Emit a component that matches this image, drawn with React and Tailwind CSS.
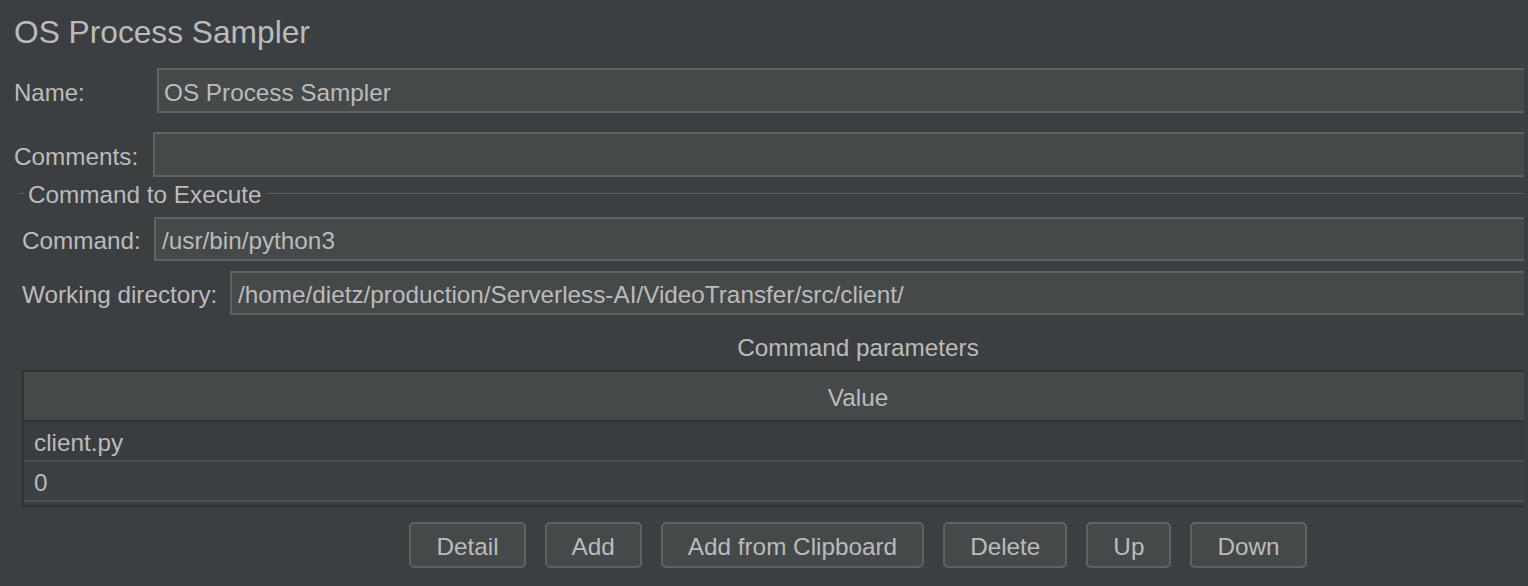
import React from 'react';

const font = { fontFamily: '"Liberation Sans", Arial, Helvetica, sans-serif' };

const Field = ({ value, className = '' }) => (
  <div className={`flex-1 h-full flex items-center bg-[#45494a] border-2 border-[#5f6162] ${className}`}>
    <span className="mt-[5px] pl-[5px] text-[24.3px] leading-none text-[#bbbbbb] whitespace-nowrap">{value}</span>
  </div>
);

const buttons = ['Detail', 'Add', 'Add from Clipboard', 'Delete', 'Up', 'Down'];

export default function App() {
  return (
    <div className="w-[1528px] h-[586px] overflow-hidden bg-[#3c3f41] flex text-[#bbbbbb]" style={font}>
      <div className="w-[1524px] shrink-0 overflow-hidden">
        <div className="w-[1716px] px-[14px]">
          {/* Title */}
          <div className="h-[62px] flex items-center">
            <h1 className="mt-[3px] text-[31.7px] leading-none">OS Process Sampler</h1>
          </div>

          {/* Name */}
          <div className="mt-[6px] h-[45px] flex items-center">
            <label className="mt-[5px] w-[143px] shrink-0 text-[24px] leading-none">Name:</label>
            <Field value="OS Process Sampler" />
          </div>

          {/* Comments */}
          <div className="mt-[19px] h-[45px] flex items-center">
            <label className="mt-[5px] w-[139px] shrink-0 text-[24.3px] leading-none">Comments:</label>
            <Field value="" />
          </div>

          {/* Command to Execute */}
          <div className="h-[32px] flex items-center">
            <div className="ml-[4px] w-[6px] h-px bg-[#5a5d5f]" />
            <span className="mt-[4px] px-[4px] text-[24.3px] leading-none whitespace-nowrap">Command to Execute</span>
            <div className="flex-1 h-px bg-[#5a5d5f]" />
          </div>

          <div className="px-[8px]">
            <div className="mt-[8px] h-[44px] flex items-center">
              <label className="mt-[5px] w-[132px] shrink-0 text-[24.3px] leading-none">Command:</label>
              <Field value="/usr/bin/python3" className="pl-[1px]" />
            </div>

            <div className="mt-[10px] h-[44px] flex items-center">
              <label className="mt-[5px] w-[208px] shrink-0 text-[24.3px] leading-none whitespace-nowrap">Working directory:</label>
              <Field value="/home/dietz/production/Serverless-AI/VideoTransfer/src/client/" className="pl-[1px]" />
            </div>

            <div className="h-[55px] pt-[21px] text-center text-[24.3px] leading-[24px]">Command parameters</div>

            {/* Table */}
            <div className="border-2 border-[#303234]">
              <div className="h-[50px] flex items-center justify-center bg-[#45494a] border-b-2 border-[#303234]">
                <span className="mt-[5px] text-[24.3px] leading-none">Value</span>
              </div>
              <div className="h-[40px] flex items-center pl-[10px] bg-[#3a3d3f] border-b-2 border-[#4b4e50]">
                <span className="mt-[5px] text-[24.3px] leading-none">client.py</span>
              </div>
              <div className="h-[40px] flex items-center pl-[10px] bg-[#3d4042] border-b-2 border-[#4b4e50]">
                <span className="mt-[5px] text-[24.3px] leading-none">0</span>
              </div>
              <div className="h-[3px] bg-[#3d4042]" />
            </div>

            {/* Buttons */}
            <div className="mt-[15px] flex justify-center gap-[19px]">
              {buttons.map((b) => (
                <button
                  key={b}
                  className="h-[46px] px-[25px] pt-[4px] rounded-[5px] border-2 border-[#5f6162] bg-[#45494a] text-[24.3px] leading-none text-[#bbbbbb] whitespace-nowrap"
                  style={font}
                >
                  {b}
                </button>
              ))}
            </div>
          </div>
        </div>
      </div>
      <div className="flex-1 bg-[#3c3f41]" />
    </div>
  );
}
